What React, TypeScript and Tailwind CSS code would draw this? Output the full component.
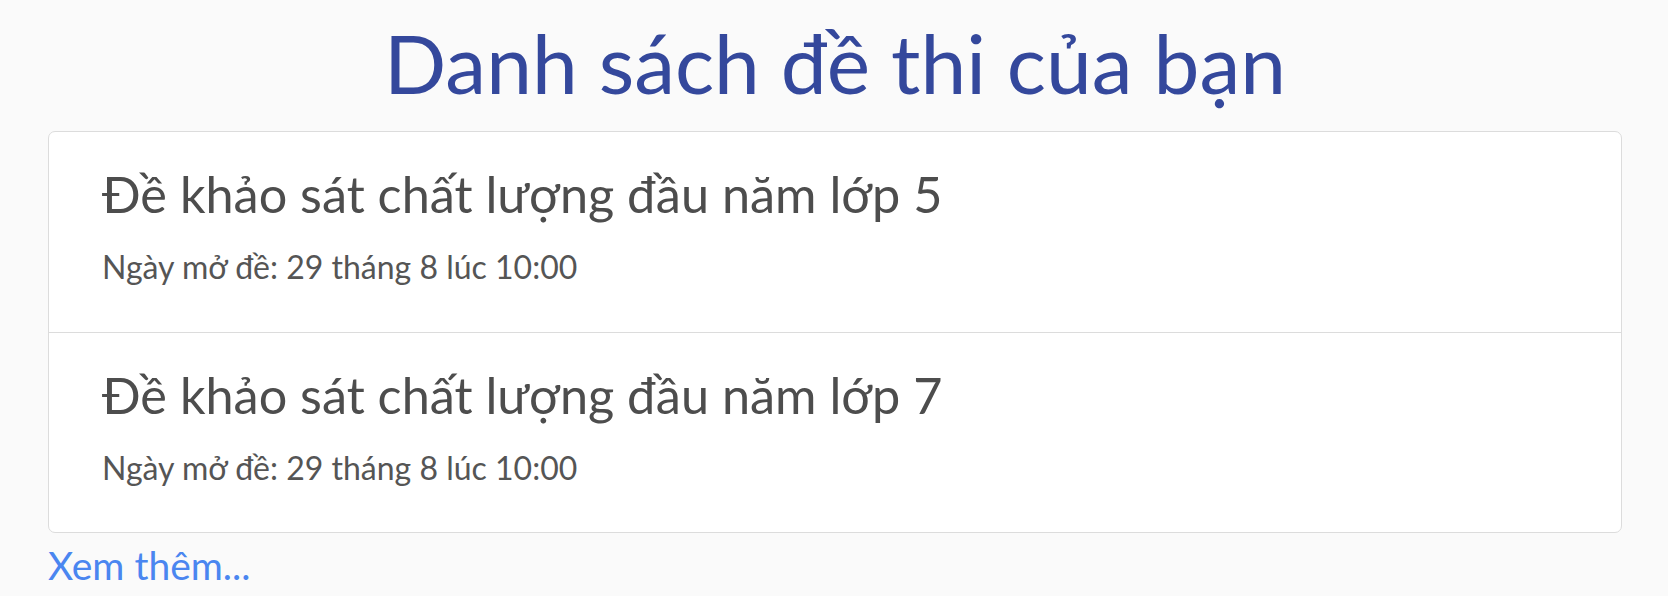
import React from "react";

type Exam = { title: string; opensAt: string };

const exams: Exam[] = [
  { title: "Đề khảo sát chất lượng đầu năm lớp 5", opensAt: "Ngày mở đề: 29 tháng 8 lúc 10:00" },
  { title: "Đề khảo sát chất lượng đầu năm lớp 7", opensAt: "Ngày mở đề: 29 tháng 8 lúc 10:00" },
];

export default function App() {
  return (
    <div
      className="min-h-[596px] bg-[#fafafa] pl-[48px] pr-[46px]"
      style={{ fontFamily: "Lato, 'Noto Sans', sans-serif" }}
    >
      <h1 className="pt-[12px] text-center text-[82px] leading-[100px] font-normal text-[#34489c]">
        Danh sách đề thi của bạn
      </h1>
      <ul className="mt-[19px] overflow-hidden rounded-[7px] border border-[#dcdcdc] bg-white">
        {exams.map((exam, i) => (
          <li
            key={i}
            className={
              "box-border h-[200px] px-[53px] pt-[32px] " + (i > 0 ? "border-t border-[#dcdcdc]" : "")
            }
          >
            <h3 className="text-[50.4px] leading-[60px] font-normal text-[#4d4d4d]">{exam.title}</h3>
            <p className="mt-[23px] text-[32px] leading-[40px] text-[#555555]">{exam.opensAt}</p>
          </li>
        ))}
      </ul>
      <a href="#" className="mt-[9px] block text-[39px] leading-[46px] text-[#4a86f0]">
        Xem thêm...
      </a>
    </div>
  );
}
